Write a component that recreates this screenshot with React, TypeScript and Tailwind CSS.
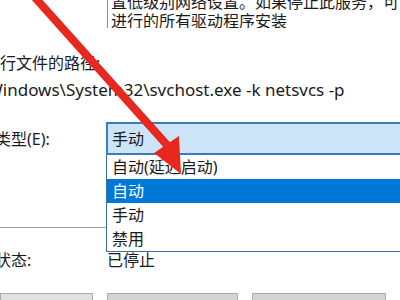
import { useState } from "react";

const font = {
  fontFamily: '"Noto Sans", "Noto Sans CJK SC", sans-serif',
};

const options = ["自动(延迟启动)", "自动", "手动", "禁用"];

const Arrow = () => (
  <svg
    className="pointer-events-none absolute left-0 top-0"
    width="400"
    height="300"
    viewBox="0 0 400 300"
  >
    <line
      x1="30"
      y1="-8"
      x2="167"
      y2="145"
      stroke="#e8281e"
      strokeWidth="8"
      strokeLinecap="round"
    />
    <polygon points="181,174 154,153 179,136" fill="#e8281e" />
  </svg>
);

export default function App() {
  const [selected] = useState(1);

  return (
    <div
      className="relative h-[300px] w-[400px] overflow-hidden bg-white text-[16px] text-[#1a1a1a]"
      style={font}
    >
      {/* description box */}
      <div className="flex">
        <div className="w-[107px] shrink-0" />
        <div className="h-[28px] flex-1 overflow-hidden border-l border-[#8c8c8c] pl-[3px]">
          <div className="-mt-[7px] whitespace-nowrap leading-[19px]">
            <div>置低级别网络设置。如果停止此服务，可</div>
            <div>进行的所有驱动程序安装</div>
          </div>
        </div>
      </div>

      {/* executable path */}
      <div className="mt-[24px] whitespace-nowrap leading-[22px]">行文件的路径:</div>
      <div className="-ml-[13px] mt-[5px] whitespace-nowrap text-[17px] leading-[22px]">
        Windows\System32\svchost.exe -k netsvcs -p
      </div>

      {/* startup type */}
      <div className="relative mt-[21px] flex h-[33px] items-center">
        <div className="-ml-[5px] w-[111px] shrink-0 whitespace-nowrap">类型(E):</div>
        <div className="flex h-[33px] flex-1 items-center border-2 border-[#3d7ab8] bg-[#cce4f7] pl-[4px] -mr-[10px]">
          手动
        </div>
        <div className="absolute left-[106px] top-[33px] w-[310px] border border-t-0 border-[#3c6fa0] bg-white">
          {options.map((o, i) => (
            <div
              key={o}
              className={
                i === selected
                  ? "flex h-[24px] items-center bg-[#0078d7] pl-[5px] text-white"
                  : "flex h-[24px] items-center pl-[5px]"
              }
            >
              {o}
            </div>
          ))}
        </div>
      </div>

      {/* separator */}
      <div className="mt-[72px] h-px w-[106px] bg-[#a0a0a0]" />

      {/* status */}
      <div className="mt-[21px] flex items-center leading-[22px]">
        <div className="-ml-[5px] w-[112px] shrink-0">状态:</div>
        <div>已停止</div>
      </div>

      {/* buttons */}
      <div className="mt-[22px] flex gap-[14px]">
        <div className="h-[24px] w-[93px] border border-[#adadad] bg-[#e1e1e1]" />
        <div className="h-[24px] w-[131px] border border-[#adadad] bg-[#d4d4d4]" />
        <div className="h-[24px] w-[134px] border border-[#adadad] bg-[#d4d4d4]" />
      </div>

      <Arrow />
    </div>
  );
}
